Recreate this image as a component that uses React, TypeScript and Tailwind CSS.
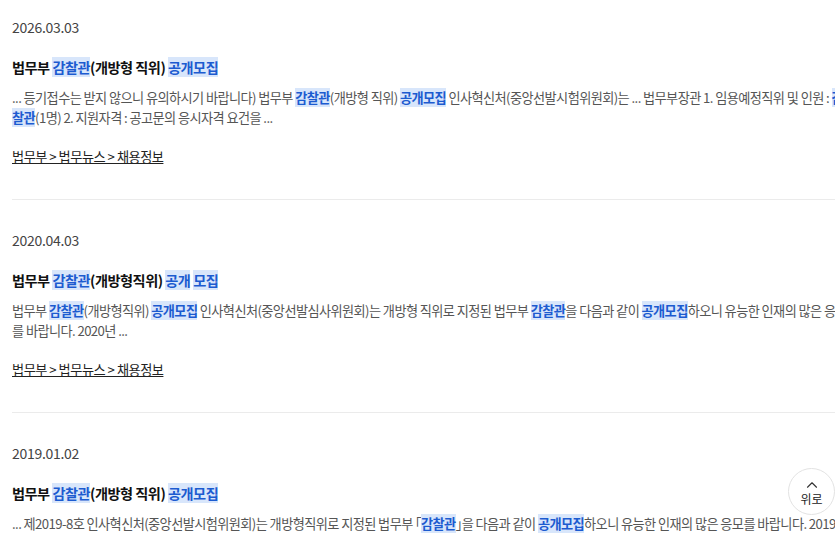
import { ChevronUp } from 'lucide-react'
import type { ReactNode } from 'react'

type Result = {
  date: string
  title: ReactNode
  lines: ReactNode[]
}

function Hl({ children, bold }: { children: ReactNode; bold?: boolean }) {
  return (
    <span
      className={
        bold
          ? 'bg-[#d8e6fb] text-[#1c5bd0] font-bold'
          : 'bg-[#d8e6fb] text-[#1c5bd0]'
      }
    >
      {children}
    </span>
  )
}

const results: Result[] = [
  {
    date: '2026.03.03',
    title: (
      <>
        법무부 <Hl>감찰관</Hl>(개방형 직위) <Hl>공개모집</Hl>
      </>
    ),
    lines: [
      <>
        ... 등기접수는 받지 않으니 유의하시기 바랍니다) 법무부 <Hl bold>감찰관</Hl>(개방형 직위){' '}
        <Hl bold>공개모집</Hl> 인사혁신처(중앙선발시험위원회)는 ... 법무부장관 1. 임용예정직위 및 인원 :{' '}
        <Hl bold>감</Hl>
      </>,
      <>
        <Hl bold>찰관</Hl>(1명) 2. 지원자격 : 공고문의 응시자격 요건을 ...
      </>,
    ],
  },
  {
    date: '2020.04.03',
    title: (
      <>
        법무부 <Hl>감찰관</Hl>(개방형직위) <Hl>공개</Hl> <Hl>모집</Hl>
      </>
    ),
    lines: [
      <>
        법무부 <Hl bold>감찰관</Hl>(개방형직위) <Hl bold>공개모집</Hl> 인사혁신처(중앙선발심사위원회)는 개방형
        직위로 지정된 법무부 <Hl bold>감찰관</Hl>을 다음과 같이 <Hl bold>공개모집</Hl>하오니 유능한 인재의 많은
        응모
      </>,
      <>를 바랍니다. 2020년 ...</>,
    ],
  },
  {
    date: '2019.01.02',
    title: (
      <>
        법무부 <Hl>감찰관</Hl>(개방형 직위) <Hl>공개모집</Hl>
      </>
    ),
    lines: [
      <>
        ... 제2019-8호 인사혁신처(중앙선발시험위원회)는 개방형직위로 지정된 법무부 ｢<Hl bold>감찰관</Hl>｣을
        다음과 같이 <Hl bold>공개모집</Hl>하오니 유능한 인재의 많은 응모를 바랍니다. 2019년도 ...
      </>,
      <>제1회 개방형직위 공개모집 ...</>,
    ],
  },
]

export default function App() {
  return (
    <div className="w-[835px] h-[536px] overflow-hidden bg-white font-['Noto_Sans_CJK_KR','Noto_Sans',sans-serif]">
      <div className="w-[1000px] pl-3">
        {results.map((r, i) => (
          <div
            key={r.date}
            className={
              i === 0
                ? 'pt-[17px] pb-[32px] border-b border-[#ebebeb] w-[823px]'
                : 'pt-[30px] pb-[32px] border-b border-[#ebebeb] w-[823px]'
            }
          >
            <p className="text-[14px] leading-5 text-[#444] tracking-[-0.3px]">{r.date}</p>
            <h3 className="mt-5 text-[14.2px] leading-5 font-semibold text-[#111] tracking-[-0.5px]">{r.title}</h3>
            <div className="mt-[11px] text-[13.2px] leading-5 text-[#555] tracking-[-0.6px] w-[1000px]">
              {r.lines.map((line, j) => (
                <p key={j} className="whitespace-nowrap">
                  {line}
                </p>
              ))}
            </div>
            <a className="mt-[19px] inline-block text-[13.2px] leading-5 text-[#222] underline tracking-[-0.5px]">
              법무부 &gt; 법무뉴스 &gt; 채용정보
            </a>
          </div>
        ))}
      </div>
      <button
        type="button"
        className="fixed left-[788px] top-[468px] w-[47px] h-[47px] rounded-full border border-[#e2e2e2] bg-white flex flex-col items-center justify-center"
      >
        <ChevronUp className="size-[18px] text-[#333] -mb-[3px]" strokeWidth={1.5} />
        <span className="text-[12px] leading-4 text-[#222]">위로</span>
      </button>
    </div>
  )
}
